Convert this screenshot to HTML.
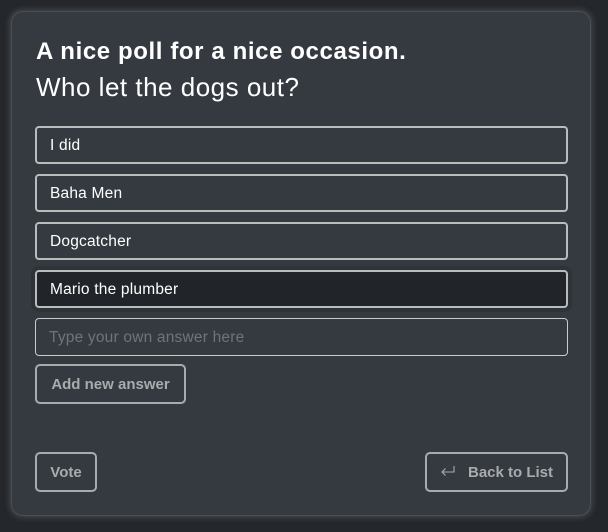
<!DOCTYPE html>
<html><head><meta charset="utf-8"><style>
html,body{margin:0;padding:0}
body{width:608px;height:532px;background:#24272b;font-family:"Liberation Sans","DejaVu Sans",sans-serif;position:relative;overflow:hidden}
.card{position:absolute;left:11px;top:11px;width:580px;height:505px;background:#343a40;border-radius:12px;border:1px solid #4a4f55;box-shadow:0 0 6px 2px rgba(120,125,130,0.35);box-sizing:border-box}
h1{position:absolute;left:24px;top:26px;margin:0;font-size:24px;font-weight:bold;color:#fff;letter-spacing:0.6px;white-space:nowrap}
h2{position:absolute;left:24px;top:60px;margin:0;font-size:26px;font-weight:normal;color:#fff;letter-spacing:0.5px;white-space:nowrap}
.opt{position:absolute;left:23px;width:533px;height:38px;box-sizing:border-box;border:2px solid #b9bbbd;border-radius:4px;color:#fff;font-size:15.5px;letter-spacing:0.2px;line-height:36px;padding-left:13px}
.sel{background:#212529;box-shadow:0 0 0 4px #2e3338}
.inp{position:absolute;left:23px;top:306px;width:533px;height:38px;box-sizing:border-box;border:1px solid #c9cbcd;border-radius:4px;color:#6c757d;font-size:15.5px;letter-spacing:0.2px;line-height:37px;padding-left:13px}
.btn{position:absolute;box-sizing:border-box;border:2px solid #a9abad;border-radius:5px;color:#a9abad;font-weight:bold;font-size:15px;line-height:37px;text-align:center}
</style></head><body>
<div class="card">
<h1>A nice poll for a nice occasion.</h1>
<h2>Who let the dogs out?</h2>
<div class="opt" style="top:114px">I did</div>
<div class="opt" style="top:162px">Baha Men</div>
<div class="opt" style="top:210px">Dogcatcher</div>
<div class="opt sel" style="top:258px">Mario the plumber</div>
<div class="inp">Type your own answer here</div>
<div class="btn" style="left:23px;top:352px;width:151px;height:40px">Add new answer</div>
<div class="btn" style="left:23px;top:440px;width:62px;height:40px">Vote</div>
<div class="btn" style="left:413px;top:440px;width:143px;height:40px;text-align:left;padding-left:41px">
<svg style="position:absolute;left:12px;top:11px" width="18" height="14" viewBox="0 0 18 14"><path d="M15 1v6H3M6.5 3.5L3 7l3.5 3.5" fill="none" stroke="#a9abad" stroke-width="1.1"/></svg>Back to List</div>
</div>
</body></html>
